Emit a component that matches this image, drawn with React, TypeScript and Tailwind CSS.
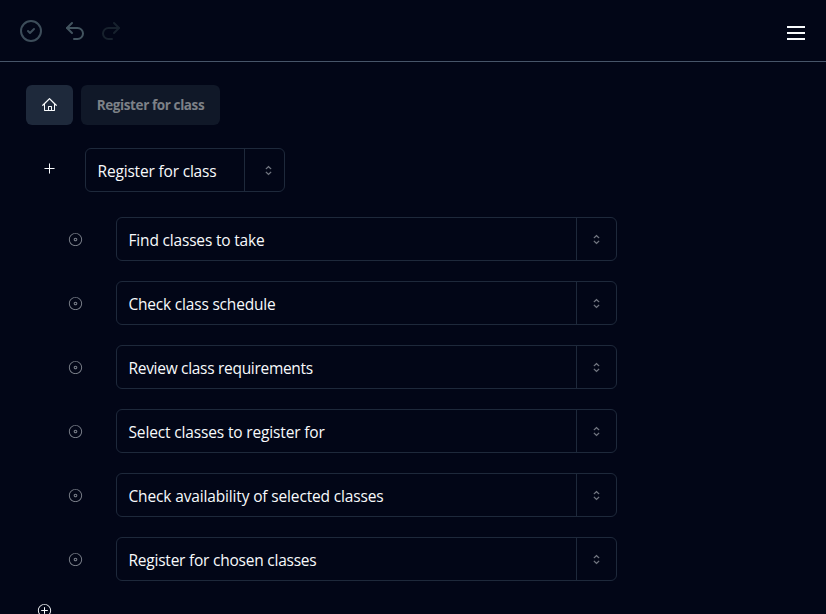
import React from "react";
import { CircleCheck, Undo2, Redo2 } from "lucide-react";
import { RxHome, RxPlus, RxPlusCircled, RxCaretSort, RxDisc } from "react-icons/rx";

const tasks = [
  { label: "Find classes to take", tracking: "tracking-[-0.18px]" },
  { label: "Check class schedule", tracking: "tracking-[-0.2px]" },
  { label: "Review class requirements", tracking: "tracking-[-0.3px]" },
  { label: "Select classes to register for", tracking: "tracking-[-0.15px]" },
  { label: "Check availability of selected classes", tracking: "tracking-[-0.15px]" },
  { label: "Register for chosen classes", tracking: "tracking-[-0.23px]" },
];

type FieldProps = { label: string; width: string; tracking: string; caret?: string };

function Field({ label, width, tracking, caret = "" }: FieldProps) {
  return (
    <div className={`flex h-11 rounded-md border border-[#1e293b] ${width}`}>
      <div className="flex flex-1 items-center pt-[3px] pl-[11.5px]">
        <span className={`whitespace-nowrap ${tracking}`}>{label}</span>
      </div>
      <button
        className={`flex w-10 items-center justify-center border-l border-[#1e293b] text-[#80858f] ${caret}`}
      >
        <RxCaretSort size={15} stroke="currentColor" strokeWidth={0.3} />
      </button>
    </div>
  );
}

export default function App() {
  return (
    <div className="h-[614px] w-[826px] overflow-hidden bg-[#020617] font-['Open_Sans','Noto_Sans',sans-serif] text-[15.5px] text-[#f8fafc]">
      <header className="flex h-[62px] items-center border-b border-[#475569] pl-[19px] pr-[18px]">
        <CircleCheck size={24} className="text-[#3d4d5a]" />
        <Undo2 size={24} className="ml-5 text-[#42545f]" />
        <Redo2 size={24} className="ml-3 text-[#17212d]" />
        <button className="mt-[5px] ml-auto">
          <svg width="24" height="24" viewBox="0 0 24 24" stroke="currentColor" strokeWidth="2">
            <path d="M3 6h18M3 12h18M3 18h18" />
          </svg>
        </button>
      </header>
      <nav className="mt-[23px] flex gap-2 pl-[26px]">
        <button className="flex h-10 w-[47px] items-center justify-center rounded-md bg-[#1e293b]">
          <RxHome size={15} />
        </button>
        <button className="flex h-10 w-[139px] items-center justify-center rounded-md bg-[#101828] pt-px text-[13.5px] font-bold whitespace-nowrap tracking-[-0.4px] text-[#7d8187]">
          Register for class
        </button>
      </nav>
      <main>
        <div className="mt-[23px] flex">
          <button className="ml-[42px] mr-7 flex h-[41px] items-center">
            <RxPlus size={15} />
          </button>
          <Field
            label="Register for class"
            width="w-[200px]"
            tracking="tracking-[-0.18px]"
            caret="pl-2"
          />
        </div>
        <ul className="mt-[25px] flex flex-col gap-5">
          {tasks.map((t) => (
            <li key={t.label} className="flex items-center">
              <RxDisc size={15} className="ml-[68px] mr-[33px] text-[#7d828c]" />
              <Field label={t.label} width="w-[501px]" tracking={t.tracking} />
            </li>
          ))}
        </ul>
        <button className="mt-[22px] ml-[37px] block">
          <RxPlusCircled size={15} />
        </button>
      </main>
    </div>
  );
}
